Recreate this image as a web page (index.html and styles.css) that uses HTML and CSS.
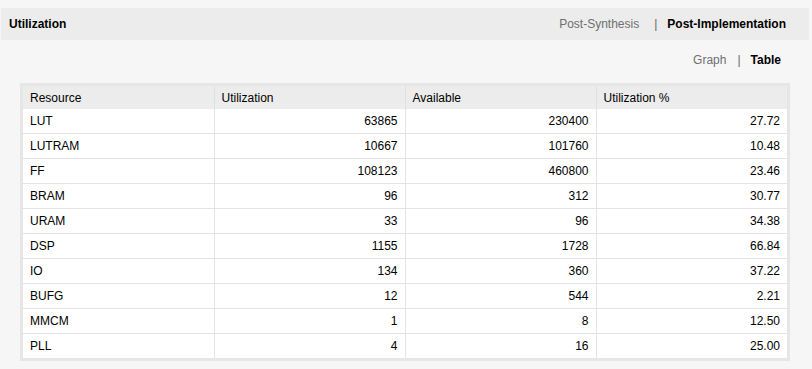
FILE: index.html
```html
<!DOCTYPE html>
<html>
<head>
<meta charset="utf-8">
<link rel="stylesheet" href="styles.css">
</head>
<body>
<div class="page">
  <div class="topbar">
    <div class="title">Utilization</div>
    <div class="tabs">
      <span class="tab">Post-Synthesis</span>
      <span class="sep">|</span>
      <span class="tab active">Post-Implementation</span>
    </div>
  </div>
  <div class="viewbar">
    <span class="tab">Graph</span>
    <span class="sep sep2">|</span>
    <span class="tab active">Table</span>
  </div>
  <div class="tablewrap">
    <table class="util">
      <thead>
        <tr><th>Resource</th><th>Utilization</th><th>Available</th><th>Utilization %</th></tr>
      </thead>
      <tbody>
        <tr><td>LUT</td><td class="num">63865</td><td class="num">230400</td><td class="num">27.72</td></tr>
        <tr><td>LUTRAM</td><td class="num">10667</td><td class="num">101760</td><td class="num">10.48</td></tr>
        <tr><td>FF</td><td class="num">108123</td><td class="num">460800</td><td class="num">23.46</td></tr>
        <tr><td>BRAM</td><td class="num">96</td><td class="num">312</td><td class="num">30.77</td></tr>
        <tr><td>URAM</td><td class="num">33</td><td class="num">96</td><td class="num">34.38</td></tr>
        <tr><td>DSP</td><td class="num">1155</td><td class="num">1728</td><td class="num">66.84</td></tr>
        <tr><td>IO</td><td class="num">134</td><td class="num">360</td><td class="num">37.22</td></tr>
        <tr><td>BUFG</td><td class="num">12</td><td class="num">544</td><td class="num">2.21</td></tr>
        <tr><td>MMCM</td><td class="num">1</td><td class="num">8</td><td class="num">12.50</td></tr>
        <tr><td>PLL</td><td class="num">4</td><td class="num">16</td><td class="num">25.00</td></tr>
      </tbody>
    </table>
  </div>
</div>
</body>
</html>
```
FILE: styles.css
```css
html, body {
  margin: 0;
  padding: 0;
  background: #f6f6f6;
}
body {
  font-family: "Liberation Sans", Arial, sans-serif;
  font-size: 12px;
  color: #000;
}
.page {
  padding-top: 8px;
}
.topbar {
  margin-left: 1px;
  width: 808px;
  height: 32px;
  background: #ececec;
  display: flex;
  align-items: center;
  justify-content: space-between;
  box-sizing: border-box;
  padding: 0 23px 0 8px;
}
.title {
  font-weight: bold;
}
.tabs, .viewbar {
  display: flex;
  align-items: center;
}
.tab {
  color: #6f6f6f;
}
.tab.active {
  color: #000;
  font-weight: bold;
}
.sep {
  color: #666;
  margin: 0 10px 0 15px;
}
.sep2 {
  margin: 0 10px 0 11px;
}
.viewbar {
  justify-content: flex-end;
  width: 781px;
  height: 27px;
  margin-top: 6px;
}
.tablewrap {
  margin-left: 20px;
  margin-top: 10px;
  width: 770px;
  box-sizing: border-box;
  border: 3px solid #e6e6e6;
  background: #fff;
}
.util {
  width: 100%;
  border-collapse: collapse;
  table-layout: fixed;
}
.util th {
  background: #ececec;
  font-weight: normal;
  text-align: left;
  height: 23px;
  padding: 0 7px;
  border-left: 1px solid #e0e0e0;
  box-sizing: border-box;
}
.util th:first-child, .util td:first-child {
  border-left: none;
}
.util td {
  height: 25px;
  padding: 0 7px;
  border-left: 1px solid #e3e3e3;
  border-top: 1px solid #e3e3e3;
  box-sizing: border-box;
}
.util tbody tr:first-child td {
  border-top: none;
  height: 24px;
}
.util td.num {
  text-align: right;
}
```
